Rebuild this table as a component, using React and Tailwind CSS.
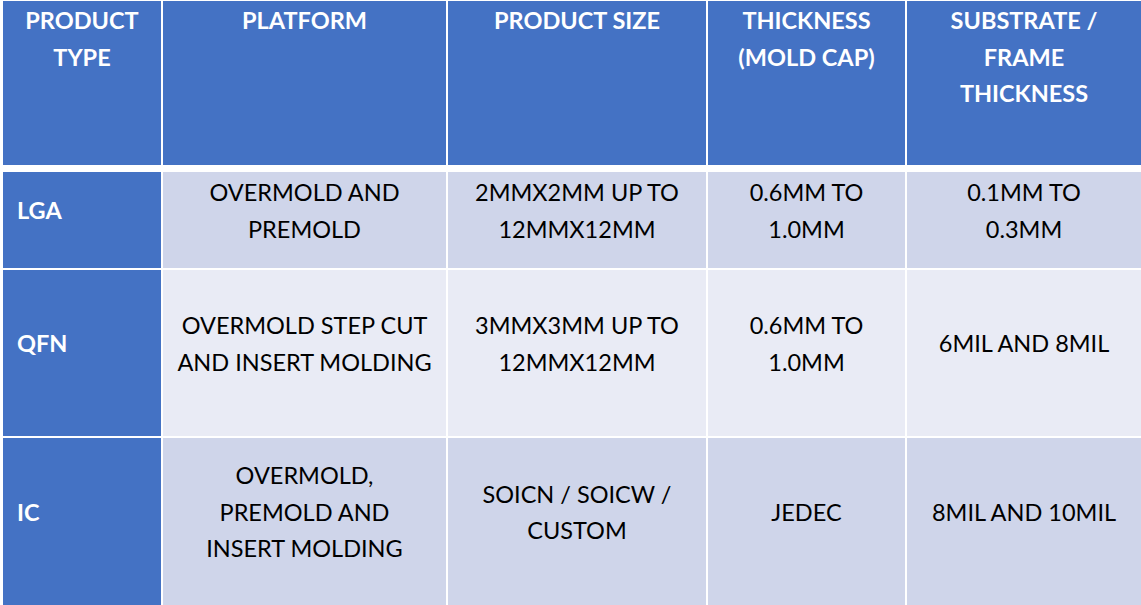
const cols = "grid grid-cols-[158px_283px_258px_197px_234px] gap-x-[2px]";

const header = [
  ["PRODUCT", "TYPE"],
  ["PLATFORM"],
  ["PRODUCT SIZE"],
  ["THICKNESS", "(MOLD CAP)"],
  ["SUBSTRATE /", "FRAME", "THICKNESS"],
];

const rows = [
  {
    type: "LGA",
    h: "h-[96px]",
    bg: "bg-[#cfd5ea]",
    cells: [
      ["OVERMOLD AND", "PREMOLD"],
      ["2MMX2MM UP TO", "12MMX12MM"],
      ["0.6MM TO", "1.0MM"],
      ["0.1MM TO", "0.3MM"],
    ],
  },
  {
    type: "QFN",
    h: "h-[166px]",
    bg: "bg-[#e9ebf5]",
    cells: [
      ["OVERMOLD STEP CUT", "AND INSERT MOLDING"],
      ["3MMX3MM UP TO", "12MMX12MM"],
      ["0.6MM TO", "1.0MM"],
      ["6MIL AND 8MIL"],
    ],
  },
  {
    type: "IC",
    h: "h-[167px]",
    bg: "bg-[#cfd5ea]",
    cells: [
      ["OVERMOLD,", "PREMOLD AND", "INSERT MOLDING"],
      ["SOICN / SOICW /", "CUSTOM"],
      ["JEDEC"],
      ["8MIL AND 10MIL"],
    ],
  },
];

function Lines({ lines }) {
  return lines.map((l, i) => (
    <span key={i} className="block whitespace-nowrap">
      {l}
    </span>
  ));
}

export default function App() {
  return (
    <div className="w-[1141px] h-[605px] bg-white overflow-hidden pl-[3px] pt-[1px] font-['Lato',sans-serif] text-[23.5px] leading-[36.5px]">
      {/* header */}
      <div className={cols}>
        {header.map((h, i) => (
          <div
            key={i}
            className="h-[164px] bg-[#4472c4] text-white font-bold text-center pt-[1px]"
          >
            <Lines lines={h} />
          </div>
        ))}
      </div>

      {/* body */}
      <div className="mt-[7px] flex flex-col gap-y-[2px]">
        {rows.map((r) => (
          <div key={r.type} className={cols}>
            <div
              className={`${r.h} bg-[#4472c4] text-white font-bold flex items-center pl-[14px] pb-[19px]`}
            >
              {r.type}
            </div>
            {r.cells.map((c, i) => (
              <div
                key={i}
                className={`${r.h} ${r.bg} text-black flex flex-col items-center justify-center text-center pb-[19px]`}
              >
                <Lines lines={c} />
              </div>
            ))}
          </div>
        ))}
      </div>
    </div>
  );
}
